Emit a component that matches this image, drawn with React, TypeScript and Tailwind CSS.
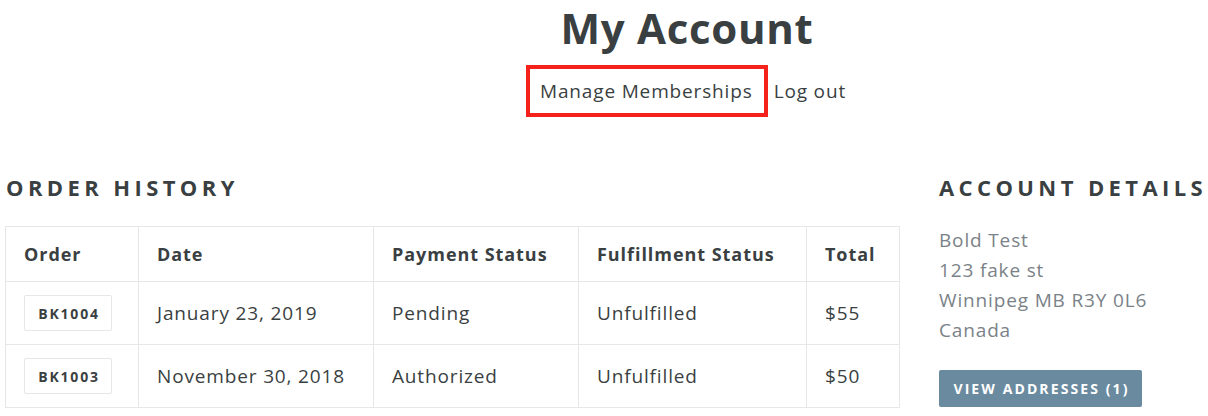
import React from "react";

const rows = [
  { id: "BK1004", date: "January 23, 2019", pay: "Pending", ful: "Unfulfilled", total: "$55" },
  { id: "BK1003", date: "November 30, 2018", pay: "Authorized", ful: "Unfulfilled", total: "$50" },
];

export default function App() {
  return (
    <div className="w-[1208px] h-[416px] overflow-hidden bg-white text-[#3a3f42] font-['Open_Sans',sans-serif]">
      <div className="w-[1374px]">
        <h1 className="text-center text-[42px] font-bold leading-[56px] tracking-[0.7px]">My Account</h1>
        <div className="flex justify-center items-center mt-[9px] text-[19px] leading-[24px] tracking-[0.85px] pl-[2px] pr-[4px]">
          <div className="border-[4px] border-[#f5221b] pl-[10px] pr-[11px] py-[10px]">Manage Memberships</div>
          <div className="ml-[6px]">Log out</div>
        </div>
        <div className="flex mt-[55px]">
          <div className="pl-[5px] w-[899px]">
            <h2 className="text-[22px] font-bold uppercase tracking-[4.4px] leading-[30px] pl-[1px]">Order History</h2>
            <table className="mt-[24px] table-fixed border-collapse w-[894px] text-left">
              <thead>
                <tr className="h-[55px] text-[18px] tracking-[0.95px]">
                  <th className="w-[133px] border border-[#e6e7e9] pl-[18px] font-bold">Order</th>
                  <th className="w-[235px] border border-[#e6e7e9] pl-[18px] font-bold">Date</th>
                  <th className="w-[205px] border border-[#e6e7e9] pl-[18px] font-bold">Payment Status</th>
                  <th className="w-[228px] border border-[#e6e7e9] pl-[18px] font-bold">Fulfillment Status</th>
                  <th className="w-[93px] border border-[#e6e7e9] pl-[18px] font-bold">Total</th>
                </tr>
              </thead>
              <tbody>
                {rows.map((r) => (
                  <tr key={r.id} className="h-[63px] text-[19px] tracking-[0.85px]">
                    <td className="border border-[#e6e7e9] pl-[18px]">
                      <span className="inline-flex items-center justify-center w-[88px] h-[36px] border border-[#e6e7e9] rounded-[2px] text-[14px] font-bold tracking-[1.8px] pl-[2px]">{r.id}</span>
                    </td>
                    <td className="border border-[#e6e7e9] pl-[18px]">{r.date}</td>
                    <td className="border border-[#e6e7e9] pl-[18px]">{r.pay}</td>
                    <td className="border border-[#e6e7e9] pl-[18px]">{r.ful}</td>
                    <td className="border border-[#e6e7e9] pl-[18px]">{r.total}</td>
                  </tr>
                ))}
              </tbody>
            </table>
          </div>
          <div className="ml-[40px] w-[435px]">
            <h2 className="text-[22px] font-bold uppercase tracking-[4.4px] leading-[30px]">Account Details</h2>
            <div className="mt-[23px] text-[19px] leading-[30px] tracking-[0.85px] text-[#7a8288]">
              <p>Bold Test</p>
              <p>123 fake st</p>
              <p>Winnipeg MB R3Y 0L6</p>
              <p>Canada</p>
            </div>
            <button className="mt-[25px] w-[203px] h-[37px] bg-[#6a8a9f] text-white rounded-[2px] text-[14px] font-bold uppercase tracking-[2.1px] pl-[2px]">View Addresses (1)</button>
          </div>
        </div>
      </div>
    </div>
  );
}
